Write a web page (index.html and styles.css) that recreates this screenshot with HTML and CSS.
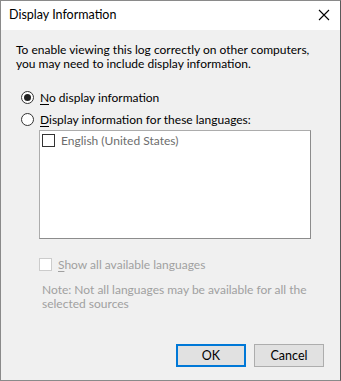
FILE: index.html
```html
<!DOCTYPE html>
<html>
<head>
<meta charset="utf-8">
<link rel="stylesheet" href="styles.css">
</head>
<body>
<div class="dialog">
  <div class="titlebar">
    <span class="title">Display Information</span>
    <svg class="close" width="12" height="12" viewBox="0 0 12 12"><path d="M1 1L11 11M11 1L1 11" stroke="#000" stroke-width="1.1" fill="none"/></svg>
  </div>
  <div class="content">
    <p class="intro">To enable viewing this log correctly on other computers,<br>you may need to include display information.</p>
    <div class="radio-row first">
      <span class="radio checked"><span class="dot"></span></span>
      <span class="label"><u>N</u>o display information</span>
    </div>
    <div class="radio-row">
      <span class="radio"></span>
      <span class="label"><u>D</u>isplay information for these languages:</span>
    </div>
    <div class="listbox">
      <div class="item">
        <span class="check"></span>
        <span class="item-label">English (United States)</span>
      </div>
    </div>
    <div class="check-row">
      <span class="check disabled"></span>
      <span class="dis-label"><u>S</u>how all available languages</span>
    </div>
    <p class="note">Note: Not all languages may be available for all the<br>selected sources</p>
    <div class="buttons">
      <button class="btn default">OK</button>
      <button class="btn">Cancel</button>
    </div>
  </div>
</div>
</body>
</html>
```
FILE: styles.css
```css
html, body {
  margin: 0;
  padding: 0;
  background: #f0f0f0;
}
.dialog {
  width: 341px;
  height: 381px;
  box-sizing: border-box;
  border: 1px solid #8a8a8a;
  border-right-color: #5a5a5a;
  background: #f0f0f0;
  font-family: "Lato", "Noto Sans", sans-serif;
  font-size: 12px;
  color: #000;
  display: flex;
  flex-direction: column;
}
.titlebar {
  height: 29px;
  background: #fff;
  display: flex;
  align-items: center;
  justify-content: space-between;
  padding: 0 10px 0 8px;
}
.title {
  font-size: 12.5px;
  line-height: 16px;
  padding-bottom: 1px;
}
.close { display: block; margin-top: -2px; }
.content {
  padding: 13px 0 0 15px;
  display: flex;
  flex-direction: column;
  flex: 1;
}
.intro {
  margin: 0;
  line-height: 14px;
}
.radio-row {
  display: flex;
  align-items: center;
  height: 16px;
  margin-top: 6px;
  padding-left: 5px;
}
.radio-row.first { margin-top: 18px; }
.radio {
  width: 11px;
  height: 11px;
  border: 1px solid #333;
  border-radius: 50%;
  display: flex;
  align-items: center;
  justify-content: center;
  background: #fff;
  margin-right: 6px;
}
.dot {
  width: 7px;
  height: 7px;
  border-radius: 50%;
  background: #222;
}
.label u, .dis-label u { text-decoration-thickness: 1px; text-underline-offset: 2px; }
.listbox {
  margin: 3px 0 0 23px;
  width: 272px;
  height: 109px;
  box-sizing: border-box;
  background: #fff;
  border: 1px solid #acacac;
  border-right-color: #8c8c8c;
  border-bottom-color: #8c8c8c;
  padding: 2px 0 0 2px;
}
.item {
  display: flex;
  align-items: center;
  height: 14px;
}
.check {
  width: 11px;
  height: 11px;
  border: 1px solid #333;
  background: #fff;
  margin-right: 6px;
  flex: none;
}
.item-label { color: #6d6d6d; }
.check-row {
  display: flex;
  align-items: center;
  margin: 18px 0 0 23px;
  height: 14px;
}
.check.disabled { border-color: #cccccc; }
.dis-label { color: #a0a0a0; }
.note {
  margin: 12px 0 0 26px;
  color: #a0a0a0;
  line-height: 14px;
}
.buttons {
  display: flex;
  justify-content: flex-end;
  gap: 8px;
  margin-top: auto;
  margin-bottom: 13px;
  padding-right: 16px;
}
.btn {
  width: 70px;
  height: 23px;
  box-sizing: border-box;
  background: #e1e1e1;
  border: 1px solid #adadad;
  font-family: inherit;
  font-size: 12.5px;
  color: #000;
  padding: 0;
}
.btn.default {
  border: 2px solid #0078d7;
}
```
